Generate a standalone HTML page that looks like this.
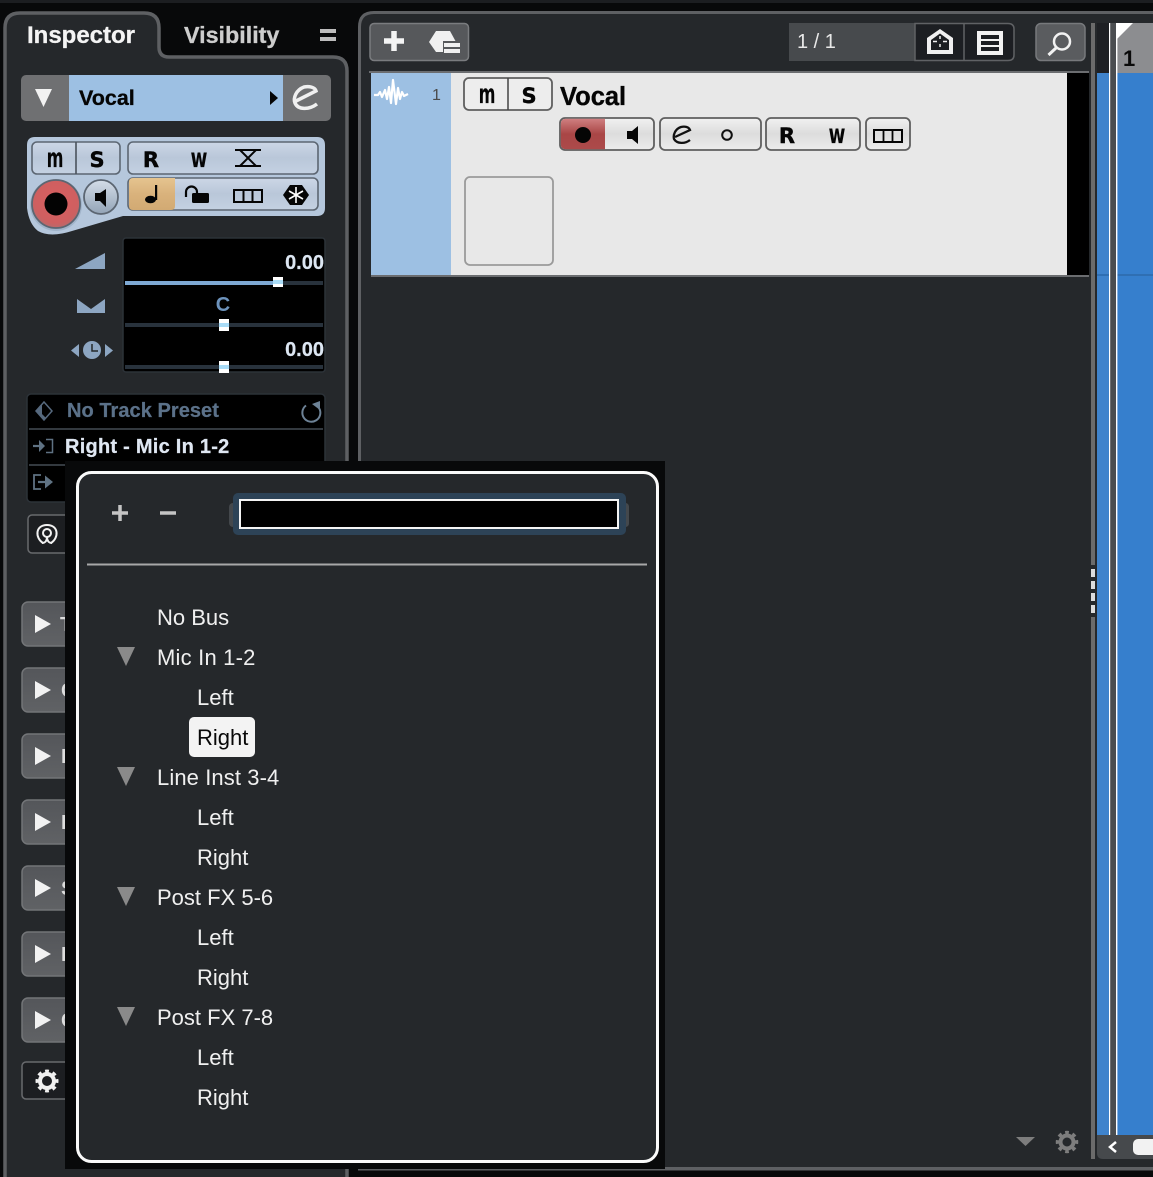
<!DOCTYPE html>
<html><head><meta charset="utf-8"><style>
html,body{margin:0;padding:0;background:#08090a;width:1153px;height:1177px;overflow:hidden}
svg{display:block;position:absolute;left:0;top:0}
text{font-family:"Liberation Sans",sans-serif}
.b{font-weight:bold}
.d{font-family:"DejaVu Sans",sans-serif;font-weight:bold}
.it{font-size:22px;fill:#f0f0f0}
</style></head><body>
<svg width="1153" height="1177" viewBox="0 0 1153 1177" xmlns="http://www.w3.org/2000/svg">
<defs>
<linearGradient id="gb" x1="0" y1="0" x2="0" y2="1"><stop offset="0" stop-color="#ccd7e6"/><stop offset=".5" stop-color="#b9c7d9"/><stop offset="1" stop-color="#c4d1e2"/></linearGradient>
<linearGradient id="gl" x1="0" y1="0" x2="0" y2="1"><stop offset="0" stop-color="#f1f1f1"/><stop offset=".5" stop-color="#dcdcdc"/><stop offset="1" stop-color="#ececec"/></linearGradient>
<linearGradient id="gr" x1="0" y1="0" x2="0" y2="1"><stop offset="0" stop-color="#cf7f80"/><stop offset=".5" stop-color="#a94646"/><stop offset="1" stop-color="#ac4a4a"/></linearGradient>
<linearGradient id="go" x1="0" y1="0" x2="0" y2="1"><stop offset="0" stop-color="#e5c48f"/><stop offset=".5" stop-color="#d9b27c"/><stop offset="1" stop-color="#d2aa73"/></linearGradient>
<linearGradient id="gs" x1="0" y1="0" x2="0" y2="1"><stop offset="0" stop-color="#d4dde8"/><stop offset="1" stop-color="#93a4b7"/></linearGradient>
<linearGradient id="gp" x1="0" y1="0" x2="0" y2="1"><stop offset="0" stop-color="#54565a"/><stop offset="1" stop-color="#606265"/></linearGradient>
<radialGradient id="gc" cx=".5" cy=".45" r=".55"><stop offset="0" stop-color="#d85f60"/><stop offset=".8" stop-color="#cf5f60"/><stop offset="1" stop-color="#b86a6c"/></radialGradient>
</defs>

<!-- page background -->
<rect width="1153" height="1177" fill="#08090a"/>
<rect width="1153" height="3" fill="#1c1e21"/>

<!-- inspector panel -->
<path d="M5,1180 V28 Q5,13 20,13 H144 Q159,13 159,28 V47 Q159,57 169,57 H333 Q347,57 347,71 V1180 Z" fill="#25282b" stroke="#5e6063" stroke-width="3.5"/>
<text x="27" y="43" class="b" font-size="24" fill="#f4f4f4" stroke="#f4f4f4" stroke-width=".3">Inspector</text>
<text x="184" y="43" class="b" font-size="23.300" fill="#cdcdcd" stroke="#cdcdcd" stroke-width=".3">Visibility</text>
<rect x="320" y="29" width="16" height="4" fill="#bdbdbd"/><rect x="320" y="37" width="16" height="4" fill="#bdbdbd"/>

<!-- track title bar -->
<rect x="21" y="75" width="310" height="46" rx="5" fill="#6f7072"/>
<rect x="69" y="75" width="214" height="46" fill="#9dc0e3"/>
<polygon points="35,89 52,89 43.500,107" fill="#f2f2f2"/>
<text x="79" y="105" class="b" font-size="21.500" fill="#050505" stroke="#050505" stroke-width=".3">Vocal</text>
<polygon points="270,91 278,98 270,105" fill="#050505"/>
<path d="M296,101 L316,91 C315,87 309,86 304,87 C296,90 293,98 295,103 C298,110 309,110 317,104" fill="none" stroke="#f0f0f0" stroke-width="3.500"/>

<!-- control box -->
<path d="M35,137 H317 Q325,137 325,145 V208 Q325,216 317,216 H123 L72,231 Q50,238 38,231 Q29,224 27,208 V145 Q27,137 35,137Z" fill="#b5c7dc"/>
<rect x="32" y="142" width="88" height="32" rx="5" fill="url(#gb)" stroke="#5c6672" stroke-width="1.600"/>
<line x1="76" y1="142" x2="76" y2="174" stroke="#4a525c" stroke-width="1.600"/>
<text transform="translate(55,167) scale(.6,1)" class="d" font-size="27" text-anchor="middle" fill="#050505">m</text>
<text x="97" y="167" class="d" font-size="21" text-anchor="middle" fill="#050505" stroke="#050505" stroke-width=".4">S</text>
<rect x="128" y="142" width="190" height="32" rx="5" fill="url(#gb)" stroke="#5c6672" stroke-width="1.600"/>
<text x="151" y="167" class="d" font-size="21" text-anchor="middle" fill="#050505" stroke="#050505" stroke-width=".4">R</text>
<text transform="translate(199,167) scale(.68,1)" class="d" font-size="27" text-anchor="middle" fill="#050505">w</text>
<path d="M235,150 H261 M235,166 H261 M240,150 L256,166 M256,150 L240,166" stroke="#050505" stroke-width="2" fill="none"/>
<rect x="128" y="178" width="190" height="32" rx="5" fill="url(#gb)" stroke="#5c6672" stroke-width="1.600"/>
<path d="M133,178 H175 V206 Q175,210 171,210 H133 Q129,210 129,206 V182 Q129,178 133,178Z" fill="url(#go)"/>
<ellipse cx="150.500" cy="199.500" rx="5.500" ry="3.800" fill="#050505"/>
<rect x="155" y="185" width="2.200" height="15" fill="#050505"/>
<path d="M186,197 V192 A5.500,5.500 0 0 1 197,192 V195" fill="none" stroke="#050505" stroke-width="2.200"/>
<rect x="192" y="193" width="17" height="10" rx="1.500" fill="#050505"/>
<rect x="234" y="190" width="28" height="12" fill="none" stroke="#050505" stroke-width="2"/>
<path d="M243.500,190 V202 M252.500,190 V202" stroke="#050505" stroke-width="2"/>
<polygon points="283,195 290,185 302,185 309,195 302,205 290,205" fill="#050505"/>
<path d="M296,187 V203 M289,191 L303,199 M303,191 L289,199" stroke="#fff" stroke-width="1.600"/>
<circle cx="56" cy="205" r="26" fill="#8fa4bb" opacity=".55"/>
<circle cx="56" cy="204" r="24" fill="url(#gc)" stroke="#5c6672" stroke-width="1.800"/>
<circle cx="56" cy="204" r="11.500" fill="#030303"/>
<circle cx="101" cy="197" r="17" fill="url(#gs)" stroke="#5c6672" stroke-width="1.800"/>
<polygon points="95,193 100,193 106,189 106,207 100,201 95,201" fill="#050505"/>

<!-- sliders box -->
<rect x="123" y="238" width="202" height="134" rx="3" fill="#000" stroke="#2c3238" stroke-width="1.500"/>
<polygon points="75,269 105,253 105,269" fill="#8da6c2"/>
<polygon points="77,299 91,309 105,299 105,313 77,313" fill="#8da6c2"/>
<circle cx="92" cy="350" r="9" fill="#8da6c2"/>
<path d="M92,344 V351 H98" stroke="#25282b" stroke-width="1.500" fill="none"/>
<polygon points="79,344 79,357 71,350.500" fill="#8da6c2"/><polygon points="105,344 105,357 113,350.500" fill="#8da6c2"/>
<text x="324" y="269" class="b" font-size="20" text-anchor="end" fill="#dce6f2" stroke="#dce6f2" stroke-width=".2">0.00</text>
<text x="223" y="311" class="b" font-size="20" text-anchor="middle" fill="#6d93bc">C</text>
<text x="324" y="356" class="b" font-size="20" text-anchor="end" fill="#dce6f2" stroke="#dce6f2" stroke-width=".2">0.00</text>
<rect x="125" y="281" width="198" height="4" fill="#28323c"/>
<rect x="125" y="281" width="150" height="4" fill="#7ea9d4"/>
<rect x="273" y="277" width="10" height="10" fill="#fff"/><rect x="273" y="280" width="10" height="4" fill="#a9dcf7"/>
<rect x="125" y="323" width="198" height="4" fill="#28323c"/>
<rect x="219" y="319" width="10" height="12" fill="#fff"/><rect x="219" y="323" width="10" height="4" fill="#a9dcf7"/>
<rect x="125" y="365" width="198" height="4" fill="#28323c"/>
<rect x="219" y="361" width="10" height="12" fill="#fff"/><rect x="219" y="365" width="10" height="4" fill="#a9dcf7"/>

<!-- preset box -->
<rect x="27" y="394" width="298" height="108" rx="4" fill="#000" stroke="#2c3238" stroke-width="1.500"/>
<rect x="29" y="428" width="294" height="2" fill="#33393f"/>
<rect x="29" y="464" width="294" height="2" fill="#33393f"/>
<path d="M44,402 L52,411 L44,420 L36,411Z" fill="none" stroke="#56697e" stroke-width="1.500"/>
<path d="M36,411 L42,405 L42,414 L46,418 L44,420Z" fill="#56697e"/>
<text x="67" y="417" class="b" font-size="20" fill="#5b7189" stroke="#5b7189" stroke-width=".25" letter-spacing=".05">No Track Preset</text>
<path d="M306,405.500 A9,9 0 1 0 319,408" fill="none" stroke="#6d8296" stroke-width="2"/>
<polygon points="312,404 320,401 320,410" fill="#6d8296"/>
<path d="M33,446 H42" stroke="#5f7283" stroke-width="2.200" fill="none"/>
<polygon points="39,440 45,446 39,452" fill="#5f7283"/>
<path d="M46,439.500 H52.500 V452.500 H46" stroke="#5f7283" stroke-width="1.500" fill="none"/>
<text x="65" y="453" class="b" font-size="20" fill="#dfe7f2" stroke="#dfe7f2" stroke-width=".25" letter-spacing=".25">Right - Mic In 1-2</text>
<path d="M41,475 H34 V489 H41" stroke="#5f7283" stroke-width="1.800" fill="none"/>
<path d="M38,482 H46" stroke="#5f7283" stroke-width="2.200"/>
<polygon points="45,475.500 53,482 45,488.500" fill="#5f7283"/>

<!-- small @ button -->
<rect x="28" y="515" width="50" height="38" rx="4" fill="#1c1e21" stroke="#686a6d" stroke-width="1.500"/>
<path d="M43,543 C35,538 35,525 47,525 C59,525 59,538 51,543" fill="none" stroke="#f2f2f2" stroke-width="2"/>
<circle cx="47" cy="533" r="4" fill="none" stroke="#f2f2f2" stroke-width="2"/>
<path d="M47,537 C47,541 45,543 42,543 M47,537 C47,541 49,543 52,543" fill="none" stroke="#f2f2f2" stroke-width="2"/>

<!-- section buttons -->
<g stroke="#737578" stroke-width="1.500" fill="url(#gp)">
<rect x="22" y="602" width="70" height="44" rx="6"/>
<rect x="22" y="668" width="70" height="44" rx="6"/>
<rect x="22" y="734" width="70" height="44" rx="6"/>
<rect x="22" y="800" width="70" height="44" rx="6"/>
<rect x="22" y="866" width="70" height="44" rx="6"/>
<rect x="22" y="932" width="70" height="44" rx="6"/>
<rect x="22" y="998" width="70" height="44" rx="6"/>
</g>
<g fill="#f2f2f2">
<polygon points="35,615 51,624 35,633"/>
<polygon points="35,681 51,690 35,699"/>
<polygon points="35,747 51,756 35,765"/>
<polygon points="35,813 51,822 35,831"/>
<polygon points="35,879 51,888 35,897"/>
<polygon points="35,945 51,954 35,963"/>
<polygon points="35,1011 51,1020 35,1029"/>
</g>
<g class="b" font-size="20" fill="#dcdcdc" font-weight="bold">
<text x="60" y="631">T</text><text x="61" y="697">C</text><text x="61" y="763">I</text><text x="61" y="829">I</text><text x="61" y="895">S</text><text x="61" y="961">I</text><text x="61" y="1027">C</text>
</g>
<rect x="22" y="1062" width="70" height="37" rx="4" fill="#1c1e21" stroke="#686a6d" stroke-width="1.500"/>
<circle cx="47" cy="1081" r="7" fill="none" stroke="#f0f0f0" stroke-width="4"/>
<circle cx="47" cy="1081" r="10" fill="none" stroke="#f0f0f0" stroke-width="3" pathLength="80" stroke-dasharray="5 5" stroke-dashoffset="2.500"/>

<!-- right panel -->
<path d="M359.500,1169 V27 Q359.500,12.500 374,12.500 H1160 V1169 Z" fill="#25282b" stroke="#5e6063" stroke-width="3"/>

<!-- toolbar -->
<rect x="370" y="23.500" width="98.500" height="37" rx="4" fill="#56585b" stroke="#7a7c7f" stroke-width="1.500"/>
<path d="M394,31 V51 M384,41 H404" stroke="#f4f4f4" stroke-width="5.500"/>
<polygon points="429,42 436,31 450,31 456,42 450,52 436,52" fill="#f0f0f0"/>
<rect x="443" y="41" width="19" height="14" fill="#56585b"/>
<rect x="444" y="43" width="16" height="4" fill="#f0f0f0"/><rect x="444" y="49" width="16" height="4" fill="#f0f0f0"/>
<rect x="789" y="23" width="126" height="38" fill="#474a4d"/>
<text x="797" y="48" font-size="20" fill="#e8e8e8">1 / 1</text>
<path d="M915,23.500 H1008 Q1014,23.500 1014,29 V55 Q1014,60.500 1008,60.500 H915Z" fill="#1c1e22" stroke="#606265" stroke-width="1.500"/>
<line x1="964" y1="23" x2="964" y2="61" stroke="#606265" stroke-width="1.500"/>
<polygon points="927,38 940,29 953,38 953,54 927,54" fill="#f0f0f0"/>
<polygon points="931,40 940,33.500 949,40 949,50 931,50" fill="#1c1e22"/>
<path d="M940,36 V39 M940,44 V47 M933,41.500 H937 M943,41.500 H947" stroke="#f0f0f0" stroke-width="1.500"/>
<rect x="977" y="31" width="26" height="24" fill="#f2f2f2"/>
<rect x="981" y="35" width="18" height="4" fill="#1c1e22"/><rect x="981" y="41" width="18" height="4" fill="#1c1e22"/><rect x="981" y="47" width="18" height="4" fill="#1c1e22"/>
<rect x="1036" y="23.500" width="49" height="37" rx="5" fill="#5a5c5f" stroke="#77797c" stroke-width="1.500"/>
<circle cx="1062" cy="41.500" r="8" fill="none" stroke="#f2f2f2" stroke-width="2.500"/>
<line x1="1056" y1="48" x2="1048.500" y2="55" stroke="#f2f2f2" stroke-width="3"/>

<!-- track row -->
<rect x="369" y="71" width="720" height="2" fill="#6b6d70"/>
<rect x="371" y="73" width="718" height="202" fill="#e8e8e8"/>
<rect x="371" y="73" width="80" height="202" fill="#9dc0e3"/>
<rect x="1067" y="73" width="22" height="202" fill="#000"/>
<rect x="371" y="275" width="718" height="2" fill="#6b6d70"/>
<path d="M374,95 H378 L380,92 L382,97 L385,90 L387,99 L389,87 L391,103 L393,80 L396,104 L398,88 L400,99 L402,92 L404,96 L408,94" fill="none" stroke="#fff" stroke-width="2.200" stroke-linejoin="round"/>
<text x="432" y="100" font-size="16" fill="#4a4a4a">1</text>
<rect x="464" y="78" width="88" height="32" rx="5" fill="#ededed" stroke="#5f5f5f" stroke-width="1.800"/>
<line x1="508" y1="78" x2="508" y2="110" stroke="#444" stroke-width="1.500"/>
<text transform="translate(487,103) scale(.6,1)" class="d" font-size="27" text-anchor="middle" fill="#050505">m</text>
<text x="529" y="103" class="d" font-size="21" text-anchor="middle" fill="#050505" stroke="#050505" stroke-width=".4">S</text>
<text x="560" y="105" class="b" font-size="25.500" fill="#050505" stroke="#050505" stroke-width=".35">Vocal</text>

<rect x="560" y="118" width="94" height="32" rx="5" fill="url(#gl)" stroke="#5f5f5f" stroke-width="1.800"/>
<path d="M566,118.800 H605 V149.200 H566 Q560.800,149.200 560.800,144 V124 Q560.800,118.800 566,118.800Z" fill="url(#gr)"/>
<circle cx="583" cy="135" r="8" fill="#050505"/>
<polygon points="627,131 632,131 638,126 638,144 632,139 627,139" fill="#050505"/>
<rect x="660" y="118" width="101" height="32" rx="5" fill="url(#gl)" stroke="#5f5f5f" stroke-width="1.800"/>
<path d="M675,137 L690,130 C689,127 685,126 681,127 C675,129 673,135 674,139 C677,144 685,144 690,140" fill="none" stroke="#111" stroke-width="2.300"/>
<circle cx="727" cy="135" r="4.800" fill="none" stroke="#111" stroke-width="2"/>
<rect x="766" y="118" width="94" height="32" rx="5" fill="url(#gl)" stroke="#5f5f5f" stroke-width="1.800"/>
<text x="787" y="143" class="d" font-size="21" text-anchor="middle" fill="#050505" stroke="#050505" stroke-width=".4">R</text>
<text transform="translate(837,143) scale(.68,1)" class="d" font-size="27" text-anchor="middle" fill="#050505">w</text>
<rect x="866" y="118" width="44" height="32" rx="5" fill="url(#gl)" stroke="#5f5f5f" stroke-width="1.800"/>
<rect x="874" y="130" width="28" height="12" fill="none" stroke="#050505" stroke-width="2"/>
<path d="M883.500,130 V142 M892.500,130 V142" stroke="#050505" stroke-width="1.800"/>
<rect x="465" y="177" width="88" height="88" rx="5" fill="#e8e8e8" stroke="#9a9a9a" stroke-width="1.800"/>

<!-- bottom right bits -->
<polygon points="1016,1137 1035,1137 1025.500,1146" fill="#7d7d7d"/>
<circle cx="1067" cy="1142" r="6.500" fill="none" stroke="#7d7d7d" stroke-width="4"/>
<circle cx="1067" cy="1142" r="9.500" fill="none" stroke="#7d7d7d" stroke-width="3.500" pathLength="80" stroke-dasharray="5 5" stroke-dashoffset="2.500"/>

<!-- timeline strip -->
<rect x="1095" y="14" width="58" height="1153" fill="#25282b"/>
<rect x="1091" y="23" width="4" height="542" fill="#6b6b6b"/>
<rect x="1091" y="617" width="4" height="542" fill="#6b6b6b"/>
<rect x="1091" y="569" width="4" height="8" fill="#dcdcdc"/><rect x="1091" y="581" width="4" height="8" fill="#dcdcdc"/><rect x="1091" y="593" width="4" height="8" fill="#dcdcdc"/><rect x="1091" y="605" width="4" height="8" fill="#dcdcdc"/>
<rect x="1097" y="73" width="12" height="1062" fill="#3f83cc"/>
<rect x="1097" y="23" width="12" height="50" fill="#1e2024"/>
<rect x="1117" y="73" width="36" height="1062" fill="#367fcd"/>
<rect x="1117" y="23" width="36" height="50" fill="#8c8d90"/>
<rect x="1097" y="274" width="56" height="2" fill="#2f6fb3"/>
<rect x="1110" y="23" width="6" height="1112" fill="#4a4d50"/>
<rect x="1109" y="23" width="1.200" height="1112" fill="#fff"/>
<rect x="1116" y="23" width="1.400" height="1112" fill="#fff"/>
<polygon points="1117,23 1133,23 1117,39" fill="#fff"/>
<text x="1123" y="66" class="b" font-size="22" fill="#0a0a0a">1</text>
<path d="M1097,1135 H1153 V1159 H1103 Q1097,1159 1097,1153Z" fill="#46494c"/>
<path d="M1116,1142 L1110,1147 L1116,1152" fill="none" stroke="#fff" stroke-width="2.500"/>
<rect x="1133" y="1139" width="30" height="16" rx="5" fill="#f2f2f2"/>
<rect x="361" y="1167" width="792" height="3.500" fill="#5e6063"/>

<!-- popup -->
<rect x="65" y="461" width="600" height="708" fill="#08090a"/>
<rect x="77.500" y="472.500" width="580" height="689" rx="14" fill="#25282b" stroke="#fafafa" stroke-width="3"/>
<path d="M120,505 V521 M112,513 H128" stroke="#c4c4c4" stroke-width="3.500"/>
<path d="M160,513 H176" stroke="#c4c4c4" stroke-width="3.500"/>
<rect x="229" y="503" width="8" height="24" rx="4" fill="#44484c"/><rect x="622" y="503" width="7" height="24" rx="3.500" fill="#44484c"/>
<rect x="233" y="493" width="393" height="42" rx="5" fill="#2d4357"/>
<rect x="240" y="500" width="378" height="28" fill="#000" stroke="#f4f4f4" stroke-width="2"/>
<rect x="87" y="563.500" width="560" height="2" fill="#a8a8a8"/>

<text x="157" y="625" class="it">No Bus</text>
<polygon points="117,647 135,647 126,666" fill="#8a8a8a"/>
<text x="157" y="665" class="it" letter-spacing=".2">Mic In 1-2</text>
<text x="197" y="705" class="it">Left</text>
<rect x="189" y="717" width="66" height="40" rx="5" fill="#f3f3f3"/>
<text x="197" y="745" class="it" style="fill:#080808">Right</text>
<polygon points="117,767 135,767 126,786" fill="#8a8a8a"/>
<text x="157" y="785" class="it" letter-spacing=".1">Line Inst 3-4</text>
<text x="197" y="825" class="it">Left</text>
<text x="197" y="865" class="it">Right</text>
<polygon points="117,887 135,887 126,906" fill="#8a8a8a"/>
<text x="157" y="905" class="it">Post FX 5-6</text>
<text x="197" y="945" class="it">Left</text>
<text x="197" y="985" class="it">Right</text>
<polygon points="117,1007 135,1007 126,1026" fill="#8a8a8a"/>
<text x="157" y="1025" class="it">Post FX 7-8</text>
<text x="197" y="1065" class="it">Left</text>
<text x="197" y="1105" class="it">Right</text>
</svg>
</body></html>
